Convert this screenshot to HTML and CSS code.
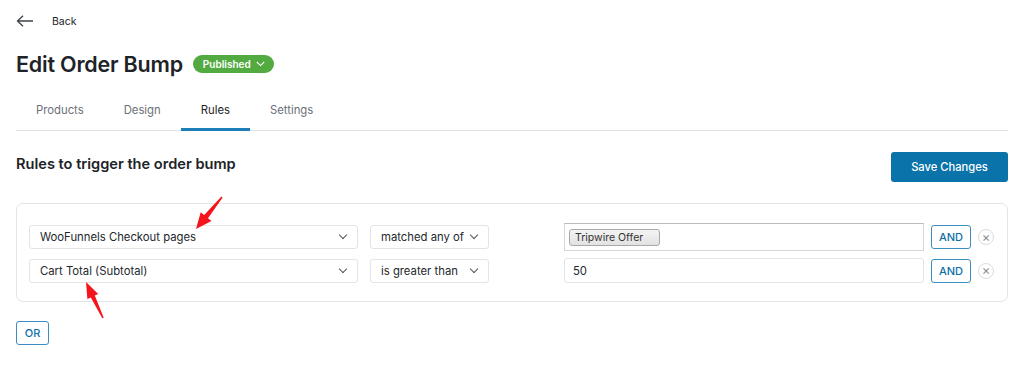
FILE: index.html
```html
<!DOCTYPE html>
<html>
<head>
    <meta charset="utf-8">
    <title>Edit Order Bump</title>
    <link rel="stylesheet" href="styles.css">
</head>
<body>
    <div class="page">
        <a class="back" href="#">
            <svg class="back-icon" width="18" height="12" viewBox="0 0 18 12"><path d="M17 6H1.5M7 0.8L1.5 6L7 11.2" fill="none" stroke="#3c434a" stroke-width="1.3"/></svg>
            <span>Back</span>
        </a>

        <div class="title-row">
            <h1>Edit Order Bump</h1>
            <span class="status">Published
                <svg width="9" height="6" viewBox="0 0 9 6"><path d="M0.8 1L4.5 4.6L8.2 1" fill="none" stroke="#fff" stroke-width="1.1"/></svg>
            </span>
        </div>

        <nav class="tabs">
            <a href="#">Products</a>
            <a href="#">Design</a>
            <a href="#" class="active">Rules</a>
            <a href="#">Settings</a>
        </nav>

        <div class="section-head">
            <h2>Rules to trigger the order bump</h2>
            <button class="btn-primary">Save Changes</button>
        </div>

        <div class="rules-box">
            <div class="rule-row">
                <div class="select wide">WooFunnels Checkout pages <i class="chev"></i></div>
                <div class="select narrow">matched any of <i class="chev"></i></div>
                <div class="field multi"><span class="tag">Tripwire Offer</span></div>
                <button class="btn-outline">AND</button>
                <span class="remove">&times;</span>
            </div>
            <div class="rule-row">
                <div class="select wide">Cart Total (Subtotal) <i class="chev"></i></div>
                <div class="select narrow">is greater than <i class="chev"></i></div>
                <div class="field">50</div>
                <button class="btn-outline">AND</button>
                <span class="remove">&times;</span>
            </div>
        </div>

        <button class="btn-outline or">OR</button>
    </div>

    <!-- annotation arrows -->
    <svg class="marks" width="1024" height="368" viewBox="0 0 1024 368">
        <polygon fill="#f4141c" points="196,229 211.5,221 208,218.2 222.6,197.5 221.4,196.5 204.2,215 200.7,212.2"/>
        <polygon fill="#f4141c" points="86,282 98.2,293.9 94.8,295.6 103.7,317.7 102.3,318.3 90.8,297.4 87.4,299.1"/>
    </svg>
</body>
</html>
```

FILE: styles.css
```css
/*base*/
body {
    margin: 0;
    background: #fff;
    font-family: Inter, "Noto Sans", sans-serif;
    color: #1e1e1e;
    position: relative;
}

.page {
    padding: 12px 16px 0 16px;
}

/*header*/
.back {
    display: flex;
    align-items: center;
    height: 18px;
    text-decoration: none;
    color: #1d2327;
    font-size: 10.5px;
}

.back-icon {
    margin-right: 18px;
}

.title-row {
    display: flex;
    align-items: center;
    margin-top: 19px;
    height: 30px;
}

h1 {
    margin: 0;
    font-size: 21.5px;
    font-weight: 600;
    color: #1d2327;
    letter-spacing: -0.2px;
}

.status {
    display: flex;
    align-items: center;
    gap: 5px;
    margin-left: 10px;
    height: 18px;
    padding: 0 9px 0 10px;
    border-radius: 9px;
    background: #52aa41;
    color: #fff;
    font-size: 10px;
    font-weight: 600;
}

/*tabs*/
.tabs {
    display: flex;
    margin-top: 12px;
    border-bottom: 1px solid #e0e2e6;
}

.tabs a {
    padding: 10px 20px 9px 20px;
    line-height: 18px;
    font-size: 11.3px;
    color: #6b7079;
    text-decoration: none;
    border-bottom: 3px solid transparent;
    margin-bottom: -1px;
}

.tabs a.active {
    color: #1e1e1e;
    border-bottom-color: #1e7fb8;
}

/*rules*/
.section-head {
    display: flex;
    justify-content: space-between;
    align-items: flex-start;
    margin-top: 21px;
}

h2 {
    margin: 2px 0 0 0;
    line-height: 20px;
    font-size: 14.6px;
    font-weight: 600;
    color: #1d2327;
}

.btn-primary {
    height: 30px;
    width: 117px;
    border: none;
    border-radius: 3px;
    background: #0a73aa;
    color: #fff;
    font-family: inherit;
    font-size: 11.2px;
    font-weight: 500;
}

.rules-box {
    margin-top: 21px;
    border: 1px solid #e2e4e8;
    border-radius: 7px;
    padding: 19px 12px 18px 12px;
    display: flex;
    flex-direction: column;
    gap: 7px;
}

.rule-row {
    display: flex;
    align-items: center;
}

.select {
    box-sizing: border-box;
    height: 24px;
    border: 1px solid #e2e4e8;
    border-radius: 3px;
    display: flex;
    align-items: center;
    justify-content: space-between;
    padding: 0 8px 0 10px;
    font-size: 11.3px;
    color: #23282d;
    white-space: nowrap;
}

.select.wide {
    width: 329px;
    margin-right: 12px;
}

.select.narrow {
    width: 119px;
}

.chev {
    width: 5px;
    height: 5px;
    border-right: 1.2px solid #50575e;
    border-bottom: 1.2px solid #50575e;
    transform: rotate(45deg);
    margin-top: -4px;
    margin-right: 3px;
}

.field {
    box-sizing: border-box;
    width: 360px;
    height: 25px;
    margin-left: 75px;
    border: 1px solid #e2e4e8;
    border-radius: 3px;
    display: flex;
    align-items: center;
    padding-left: 8px;
    font-size: 11.3px;
    color: #23282d;
}

.field.multi {
    height: 28px;
    border-color: #d4d6da;
    border-top-color: #b8bbbf;
    border-radius: 0;
    padding-left: 4px;
}

.tag {
    box-sizing: border-box;
    width: 91px;
    height: 17px;
    border: 1px solid #a9a9a9;
    border-radius: 3px;
    background: linear-gradient(#f4f4f4, #e2e2e2);
    font-size: 10.5px;
    line-height: 15px;
    padding-left: 5px;
    color: #333;
}

.btn-outline {
    height: 24px;
    width: 40px;
    margin-left: 7px;
    border: 1px solid #3b8dc2;
    border-radius: 3px;
    background: #fff;
    color: #0b6fa8;
    font-family: inherit;
    font-size: 11px;
    font-weight: 500;
    padding: 0;
}

.remove {
    box-sizing: border-box;
    width: 16px;
    height: 16px;
    margin-left: 7px;
    border: 1px solid #dcdcde;
    border-radius: 50%;
    display: flex;
    align-items: center;
    justify-content: center;
    font-size: 13px;
    line-height: 1;
    color: #8c8f94;
}

.btn-outline.or {
    margin: 19px 0 0 0;
    width: 33px;
}

/*annotation layer*/
.marks {
    position: absolute;
    left: 0;
    top: 0;
    pointer-events: none;
}
```
